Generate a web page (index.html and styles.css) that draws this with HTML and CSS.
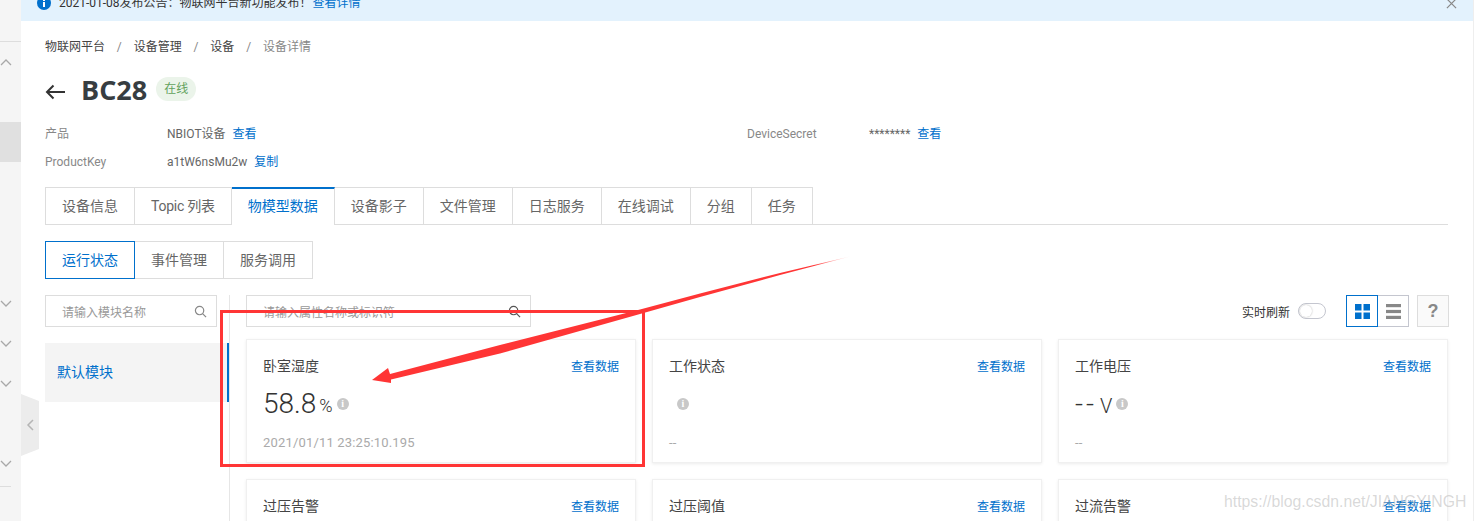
FILE: index.html
```html
<!DOCTYPE html>
<html>
<head>
	<meta charset="UTF-8">
	<title>设备详情</title>
	<link rel="stylesheet" href="styles.css">
</head>
<body>
	<div class="page">
		<aside class="sidebar">
			<div class="sideLine"></div>
			<svg class="chev chevUp" viewBox="0 0 12 8"><path d="M1 7l5-5 5 5"/></svg>
			<div class="sideActive"></div>
			<svg class="chev chevA" viewBox="0 0 12 8"><path d="M1 1l5 5 5-5"/></svg>
			<svg class="chev chevB" viewBox="0 0 12 8"><path d="M1 1l5 5 5-5"/></svg>
			<svg class="chev chevC" viewBox="0 0 12 8"><path d="M1 1l5 5 5-5"/></svg>
			<svg class="chev chevD" viewBox="0 0 12 8"><path d="M1 1l5 5 5-5"/></svg>
			<div class="sideLine2"></div>
		</aside>
		<div class="collapse">
			<svg viewBox="0 0 18 62"><path class="collapseBg" d="M0 0L18 7V55L0 62Z"/><path class="collapseArrow" d="M12 26l-5 5 5 5"/></svg>
		</div>

		<main class="main">
			<div class="notice">
				<svg class="noticeIcon" viewBox="0 0 14 14"><circle cx="7" cy="7" r="7"/><rect x="6" y="6" width="2" height="5" fill="#fff"/><rect x="6" y="3" width="2" height="2" fill="#fff"/></svg>
				<span>2021-01-08发布公告：物联网平台新功能发布！</span>
				<a class="link noticeLink">查看详情</a>
				<svg class="noticeClose" viewBox="0 0 12 12"><path d="M1 1l10 10M11 1L1 11"/></svg>
			</div>

			<div class="content">
				<div class="crumbs">
					<span>物联网平台</span><i>/</i><span>设备管理</span><i>/</i><span>设备</span><i>/</i><span class="crumbLast">设备详情</span>
				</div>

				<div class="titleRow">
					<svg class="back" viewBox="0 0 20 16"><path d="M20 8H2M8.500 1.500L2 8l6.500 6.500"/></svg>
					<h1>BC28</h1>
					<span class="tag">在线</span>
				</div>

				<div class="infoGrid">
					<div class="infoRow"><label>产品</label><span>NBIOT设备</span><a class="link">查看</a></div>
					<div class="infoRow"><label>DeviceSecret</label><span>********</span><a class="link">查看</a></div>
					<div class="infoRow"><label>ProductKey</label><span>a1tW6nsMu2w</span><a class="link">复制</a></div>
				</div>

				<div class="tabs">
					<div class="tab">设备信息</div>
					<div class="tab tabTopic">Topic 列表</div>
					<div class="tab tabActive">物模型数据</div>
					<div class="tab">设备影子</div>
					<div class="tab">文件管理</div>
					<div class="tab">日志服务</div>
					<div class="tab">在线调试</div>
					<div class="tab">分组</div>
					<div class="tab">任务</div>
				</div>

				<div class="subTabs">
					<div class="subTab subActive">运行状态</div>
					<div class="subTab">事件管理</div>
					<div class="subTab">服务调用</div>
				</div>

				<div class="panel">
					<div class="modules">
						<div class="search moduleSearch">
							<span>请输入模块名称</span>
							<svg class="searchIcon" viewBox="0 0 14 14"><circle cx="6" cy="6" r="4.500"/><path d="M9.500 9.500L13 13"/></svg>
						</div>
						<div class="moduleItem">默认模块</div>
					</div>

					<div class="props">
						<div class="propsBar">
							<div class="search propSearch">
								<span>请输入属性名称或标识符</span>
								<svg class="searchIcon" viewBox="0 0 14 14"><circle cx="6" cy="6" r="4.500"/><path d="M9.500 9.500L13 13"/></svg>
							</div>
							<div class="barRight">
								<span class="liveLabel">实时刷新</span>
								<div class="switch"><div class="knob"></div></div>
								<div class="viewBtn viewActive">
									<svg viewBox="0 0 15 15"><rect width="6.500" height="6.500"/><rect x="8.500" width="6.500" height="6.500"/><rect y="8.500" width="6.500" height="6.500"/><rect x="8.500" y="8.500" width="6.500" height="6.500"/></svg>
								</div>
								<div class="viewBtn viewList">
									<svg viewBox="0 0 15 15"><rect width="15" height="3.200"/><rect y="5.900" width="15" height="3.200"/><rect y="11.800" width="15" height="3.200"/></svg>
								</div>
								<div class="helpBtn">?</div>
							</div>
						</div>

						<div class="cards">
							<div class="card">
								<div class="cardHead"><span>卧室湿度</span><a class="link">查看数据</a></div>
								<div class="cardValue"><b>58.8</b><em>%</em><span class="info">i</span></div>
								<div class="cardTime">2021/01/11 23:25:10.195</div>
							</div>
							<div class="card">
								<div class="cardHead"><span>工作状态</span><a class="link">查看数据</a></div>
								<div class="cardValue cardEmpty"><span class="info">i</span></div>
								<div class="cardTime">--</div>
							</div>
							<div class="card">
								<div class="cardHead"><span>工作电压</span><a class="link">查看数据</a></div>
								<div class="cardValue"><b class="dash">--</b><em class="unitV">V</em><span class="info">i</span></div>
								<div class="cardTime">--</div>
							</div>
							<div class="card">
								<div class="cardHead"><span>过压告警</span><a class="link">查看数据</a></div>
							</div>
							<div class="card">
								<div class="cardHead"><span>过压阈值</span><a class="link">查看数据</a></div>
							</div>
							<div class="card">
								<div class="cardHead"><span>过流告警</span><a class="link">查看数据</a></div>
							</div>
						</div>
					</div>
				</div>
			</div>
		</main>
	</div>

	<!-- red markup drawn over the screenshot -->
	<div class="markBox"></div>
	<svg class="markArrow" viewBox="0 0 1474 521">
		<defs>
			<linearGradient id="fade" gradientUnits="userSpaceOnUse" x1="640" y1="312" x2="852" y2="256">
				<stop offset="0" stop-color="#ff3535"/>
				<stop offset="0.82" stop-color="#ff3535"/>
				<stop offset="1" stop-color="#ff3535" stop-opacity="0"/>
			</linearGradient>
		</defs>
		<path fill="url(#fade)" d="M372 380L388 368L390 374L500 345L640 309.500L700 293.500L780 273L852 256L780 275L700 297L640 314L500 353.500L391 379.500L391 383Z"/>
	</svg>
	<div class="watermark">https://blog.csdn.net/JIANGYINGH</div>
</body>
</html>
```

FILE: styles.css
```css
html, body {
	margin: 0;
	height: 521px;
	overflow: hidden;
	background-color: #fff;
}
body {
	position: relative;
	font-family: "Roboto", "Noto Sans CJK SC", sans-serif;
	font-size: 12px;
	color: #666;
}
a {
	cursor: pointer;
}
.link {
	color: #0070cc;
}

.page {
	display: flex;
	height: 521px;
	overflow: hidden;
}

/* left rail, cut off by the screenshot */
.sidebar {
	position: relative;
	flex: 0 0 21px;
	background-color: #f5f5f5;
}
.sideLine {
	position: absolute;
	top: 41px;
	left: 0;
	width: 21px;
	height: 1px;
	background-color: #ddd;
}
.sideLine2 {
	position: absolute;
	top: 486px;
	left: 0;
	width: 11px;
	height: 1px;
	background-color: #ddd;
}
.sideActive {
	position: absolute;
	top: 122px;
	left: 0;
	width: 21px;
	height: 40px;
	background-color: #e0e0e0;
}
.chev {
	position: absolute;
	left: 0;
	width: 12px;
	height: 8px;
	fill: none;
	stroke: #a8a8a8;
	stroke-width: 1.300;
}
.chevUp { top: 58px; }
.chevA { top: 300px; }
.chevB { top: 340px; }
.chevC { top: 380px; }
.chevD { top: 460px; }
.collapse {
	position: absolute;
	top: 394px;
	left: 21px;
	width: 18px;
	height: 62px;
}
.collapse svg {
	display: block;
	width: 18px;
	height: 62px;
}
.collapseBg {
	fill: #ececec;
}
.collapseArrow {
	fill: none;
	stroke: #b5b5b5;
	stroke-width: 1.500;
}

.main {
	flex: 1;
	min-width: 0;
	padding-right: 9px;
	box-sizing: border-box;
	background-color: #fff;
	border-right: 1px solid #eee;
	overflow: hidden;
}
.notice {
	display: flex;
	align-items: center;
	height: 21px;
	margin-right: -9px;
	padding: 0 15px 15px;
	box-sizing: border-box;
	background-color: #e3f2fd;
	color: #333;
	line-height: 6px;
}
.noticeIcon {
	width: 14px;
	height: 14px;
	margin: 0 8px 0 1px;
	fill: #0070cc;
	flex: none;
}
.noticeLink {
	margin-left: 1px;
}
.noticeClose {
	width: 11px;
	height: 11px;
	margin-left: auto;
	margin-right: 1px;
	fill: none;
	stroke: #888;
	stroke-width: 1.300;
	flex: none;
}

.content {
	padding: 17px 16px 0 24px;
}
.crumbs {
	display: flex;
	align-items: center;
	height: 18px;
	line-height: 18px;
	color: #444;
}
.crumbs i {
	font-style: normal;
	color: #888;
	margin: 0 11.850px;
}
.crumbLast {
	color: #888;
}

.titleRow {
	display: flex;
	align-items: center;
	height: 24px;
	margin-top: 21px;
}
.back {
	width: 20px;
	height: 16px;
	margin: 6px 16px 0 0;
	fill: none;
	stroke: #333;
	stroke-width: 2;
	flex: none;
}
.titleRow h1 {
	margin: 2px 9px 0 0;
	font-family: "Open Sans", "Noto Sans CJK SC", sans-serif;
	font-size: 27px;
	line-height: 24px;
	font-weight: 700;
	color: #373d41;
}
.tag {
	display: inline-block;
	width: 40px;
	height: 24px;
	border-radius: 12px;
	background-color: #ebf4ea;
	color: #62a25c;
	text-align: center;
	line-height: 24px;
}

.infoGrid {
	display: grid;
	grid-template-columns: 702px 1fr;
	grid-auto-rows: 28px;
	margin-top: 19px;
}
.infoRow {
	display: flex;
	align-items: center;
	height: 28px;
	line-height: 18px;
}
.infoRow label {
	flex: 0 0 122px;
	color: #888;
}
.infoRow span {
	margin-right: 7px;
	color: #666;
}

.tabs {
	display: flex;
	height: 37px;
	margin-top: 11px;
	border-bottom: 1px solid #ddd;
}
.tab {
	box-sizing: border-box;
	padding: 0 16px;
	height: 37px;
	border: 1px solid #ddd;
	border-left: 0;
	border-bottom: 0;
	font-size: 14px;
	line-height: 36px;
	color: #666;
	white-space: nowrap;
}
.tab:first-child {
	border-left: 1px solid #ddd;
}
.tabTopic {
	letter-spacing: -.25px;
}
.tabActive {
	height: 38px;
	border-top: 2px solid #0070cc;
	line-height: 35px;
	color: #0070cc;
	background-color: #fff;
}

.subTabs {
	display: flex;
	margin-top: 16px;
}
.subTab {
	box-sizing: border-box;
	width: 89px;
	height: 38px;
	border: 1px solid #ddd;
	border-left: 0;
	font-size: 14px;
	line-height: 36px;
	text-align: center;
	color: #666;
}
.subActive {
	width: 90px;
	border: 1px solid #0070cc;
	color: #0070cc;
}

.panel {
	display: flex;
	margin-top: 16px;
}
.modules {
	flex: 0 0 184px;
	height: 230px;
	border-right: 1px solid #e6e6e6;
}
.search {
	display: flex;
	align-items: center;
	justify-content: space-between;
	box-sizing: border-box;
	height: 32px;
	padding: 0 9px 0 16px;
	border: 1px solid #ddd;
	color: #999;
	background-color: #fff;
}
.moduleSearch {
	width: 172px;
}
.searchIcon {
	width: 13px;
	height: 13px;
	fill: none;
	stroke: #888;
	stroke-width: 1.300;
	flex: none;
}
.propSearch .searchIcon {
	stroke: #555;
}
.moduleItem {
	height: 59px;
	margin-top: 16px;
	padding-left: 12px;
	background-color: #f4f4f4;
	border-right: 2px solid #0070cc;
	font-size: 14px;
	line-height: 59px;
	color: #0070cc;
}

.props {
	flex: 1;
	min-width: 0;
	margin-left: 16px;
}
.propsBar {
	display: flex;
	justify-content: space-between;
}
.propSearch {
	width: 285px;
}
.barRight {
	display: flex;
	align-items: center;
	margin-right: -1px;
}
.liveLabel {
	color: #333;
}
.switch {
	box-sizing: border-box;
	width: 28px;
	height: 16px;
	margin: 0 20px 0 8px;
	border: 1px solid #c4c6cf;
	border-radius: 8px;
	background-color: #fff;
}
.knob {
	width: 12px;
	height: 12px;
	margin: 1px;
	border-radius: 50%;
	background-color: #fff;
	box-shadow: 0 0 2px rgba(0, 0, 0, .3);
}
.viewBtn {
	display: flex;
	align-items: center;
	justify-content: center;
	box-sizing: border-box;
	width: 32px;
	height: 32px;
	border: 1px solid #c4c6cf;
}
.viewBtn svg {
	width: 15px;
	height: 15px;
}
.viewActive {
	border-color: #0070cc;
	fill: #0070cc;
}
.viewList {
	width: 31px;
	border-left: 0;
	fill: #888;
}
.helpBtn {
	box-sizing: border-box;
	width: 32px;
	height: 32px;
	margin-left: 8px;
	border: 1px solid #ddd;
	background-color: #fafafa;
	font-family: "Liberation Sans", sans-serif;
	font-size: 18px;
	font-weight: 700;
	line-height: 30px;
	text-align: center;
	color: #888;
}

.cards {
	display: grid;
	grid-template-columns: repeat(3, 390px);
	grid-auto-rows: 124px;
	gap: 16px;
	margin-top: 12px;
}
.card {
	box-sizing: border-box;
	padding: 15px 16px;
	background-color: #fff;
	border: 1px solid #f0f0f0;
	box-shadow: 0 1px 3px rgba(0, 0, 0, .08);
}
.cardHead {
	display: flex;
	align-items: center;
	justify-content: space-between;
	height: 20px;
	font-size: 14px;
	color: #444;
}
.cardHead a {
	font-size: 12px;
}
.cardValue {
	display: flex;
	align-items: center;
	height: 40px;
	margin-top: 8px;
	color: #333;
}
.cardValue b {
	font-size: 28px;
	font-weight: 300;
}
.cardValue em {
	margin-left: 3px;
	font-size: 18px;
	font-weight: 300;
	font-style: normal;
	padding-top: 4px;
}
.cardEmpty {
	padding-left: 4px;
}
.dash {
	letter-spacing: 3px;
}
.cardValue .unitV {
	font-size: 20px;
	padding-top: 5px;
}
.info {
	display: inline-block;
	width: 12px;
	height: 12px;
	margin: 2px 0 0 4px;
	border-radius: 50%;
	background-color: #c8c8c8;
	font-family: "Liberation Serif", serif;
	font-size: 10px;
	font-weight: 700;
	line-height: 12px;
	text-align: center;
	color: #fff;
}
.cardTime {
	margin-top: 12px;
	font-size: 13px;
	line-height: 16px;
	letter-spacing: .17px;
	color: #aaa;
}

/* annotation layer */
.markBox {
	position: absolute;
	top: 310px;
	left: 220px;
	box-sizing: border-box;
	width: 425px;
	height: 157px;
	border: 3px solid #ff3535;
}
.markArrow {
	position: absolute;
	top: 0;
	left: 0;
	width: 1474px;
	height: 521px;
}
.watermark {
	position: absolute;
	top: 493px;
	left: 1224px;
	font-family: "Liberation Sans", sans-serif;
	font-size: 15.800px;
	white-space: nowrap;
	color: rgba(170, 170, 170, .45);
}
```
